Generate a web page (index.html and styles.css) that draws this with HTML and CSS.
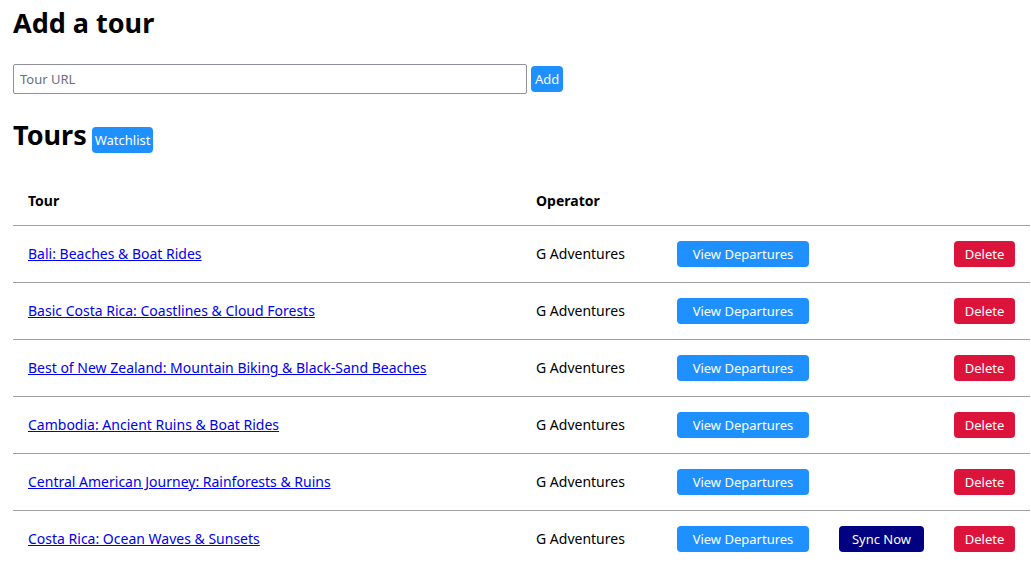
FILE: index.html
```html
<!DOCTYPE html>
<html lang="en">
<head>
<meta charset="utf-8">
<title>Tours</title>
<link rel="stylesheet" href="styles.css">
</head>
<body>
<h1 class="title">Add a tour</h1>
<form class="add-form">
  <input class="url-input" type="text" placeholder="Tour URL">
  <button type="button" class="btn btn-add">Add</button>
</form>
<div class="tours-head">
  <h1 class="title">Tours</h1>
  <button type="button" class="btn btn-watch">Watchlist</button>
</div>
<table class="tours">
  <colgroup>
    <col class="c-tour"><col class="c-op"><col class="c-view"><col class="c-sync"><col class="c-del">
  </colgroup>
  <thead>
    <tr><th>Tour</th><th>Operator</th><th></th><th></th><th></th></tr>
  </thead>
  <tbody>
    <tr><td><a href="#">Bali: Beaches &amp; Boat Rides</a></td><td>G Adventures</td><td><button class="btn btn-view">View Departures</button></td><td></td><td><button class="btn btn-del">Delete</button></td></tr>
    <tr><td><a href="#">Basic Costa Rica: Coastlines &amp; Cloud Forests</a></td><td>G Adventures</td><td><button class="btn btn-view">View Departures</button></td><td></td><td><button class="btn btn-del">Delete</button></td></tr>
    <tr><td><a href="#">Best of New Zealand: Mountain Biking &amp; Black-Sand Beaches</a></td><td>G Adventures</td><td><button class="btn btn-view">View Departures</button></td><td></td><td><button class="btn btn-del">Delete</button></td></tr>
    <tr><td><a href="#">Cambodia: Ancient Ruins &amp; Boat Rides</a></td><td>G Adventures</td><td><button class="btn btn-view">View Departures</button></td><td></td><td><button class="btn btn-del">Delete</button></td></tr>
    <tr><td><a href="#">Central American Journey: Rainforests &amp; Ruins</a></td><td>G Adventures</td><td><button class="btn btn-view">View Departures</button></td><td></td><td><button class="btn btn-del">Delete</button></td></tr>
    <tr><td><a href="#">Costa Rica: Ocean Waves &amp; Sunsets</a></td><td>G Adventures</td><td><button class="btn btn-view">View Departures</button></td><td><button class="btn btn-sync">Sync Now</button></td><td><button class="btn btn-del">Delete</button></td></tr>
  </tbody>
</table>
</body>
</html>
```

FILE: styles.css
```css
html, body {
  margin: 0;
  background: #fff;
}
body {
  padding: 5px 1px 0 13px;
  font-family: "Noto Sans", "Open Sans", sans-serif;
  font-size: 14px;
  color: #000;
}
.title {
  margin: 0;
  font-size: 27px;
  line-height: 36px;
  font-weight: 700;
}
.add-form {
  display: flex;
  align-items: center;
  gap: 4px;
  margin-top: 23px;
}
.url-input {
  box-sizing: border-box;
  width: 514px;
  height: 30px;
  margin: 0;
  padding: 0 6px;
  border: 1px solid #8f8f9d;
  border-radius: 2px;
  font-family: inherit;
  font-size: 13px;
  color: #000;
}
.url-input::placeholder {
  color: #6d6d7a;
}
.btn {
  box-sizing: border-box;
  border: none;
  border-radius: 4px;
  color: #fff;
  font-family: inherit;
  font-size: 13px;
  line-height: 18px;
  padding: 4px 6px;
  cursor: pointer;
}
.btn-add {
  background: #1e90ff;
  height: 26px;
  padding: 4px;
}
.tours-head {
  display: flex;
  align-items: baseline;
  gap: 5px;
  margin-top: 23px;
}
.btn-watch {
  background: #1e90ff;
  height: 26px;
  padding: 4px 3px;
}
.tours {
  margin-top: 22px;
  width: 1017px;
  border-collapse: collapse;
  table-layout: fixed;
}
.c-tour { width: 508px; }
.c-op { width: 141px; }
.c-view { width: 162px; }
.c-sync { width: 115px; }
.c-del { width: 91px; }
.tours th, .tours td {
  padding: 15px;
  text-align: left;
  vertical-align: middle;
  line-height: 20px;
  white-space: nowrap;
}
.tours th {
  padding: 16px 15px 14px;
  font-size: 14px;
  font-weight: 700;
  border-bottom: 1px solid #a0a0a0;
}
.tours td {
  height: 26px;
  border-bottom: 1px solid #a0a0a0;
}
.tours tbody tr:last-child td {
  border-bottom: none;
}
.tours a {
  color: #0000ee;
  text-decoration: underline;
}
.btn-view {
  background: #1e90ff;
  width: 132px;
  height: 26px;
}
.btn-sync {
  background: #000080;
  width: 85px;
  height: 26px;
}
.btn-del {
  background: #dc143c;
  width: 61px;
  height: 26px;
}
```
